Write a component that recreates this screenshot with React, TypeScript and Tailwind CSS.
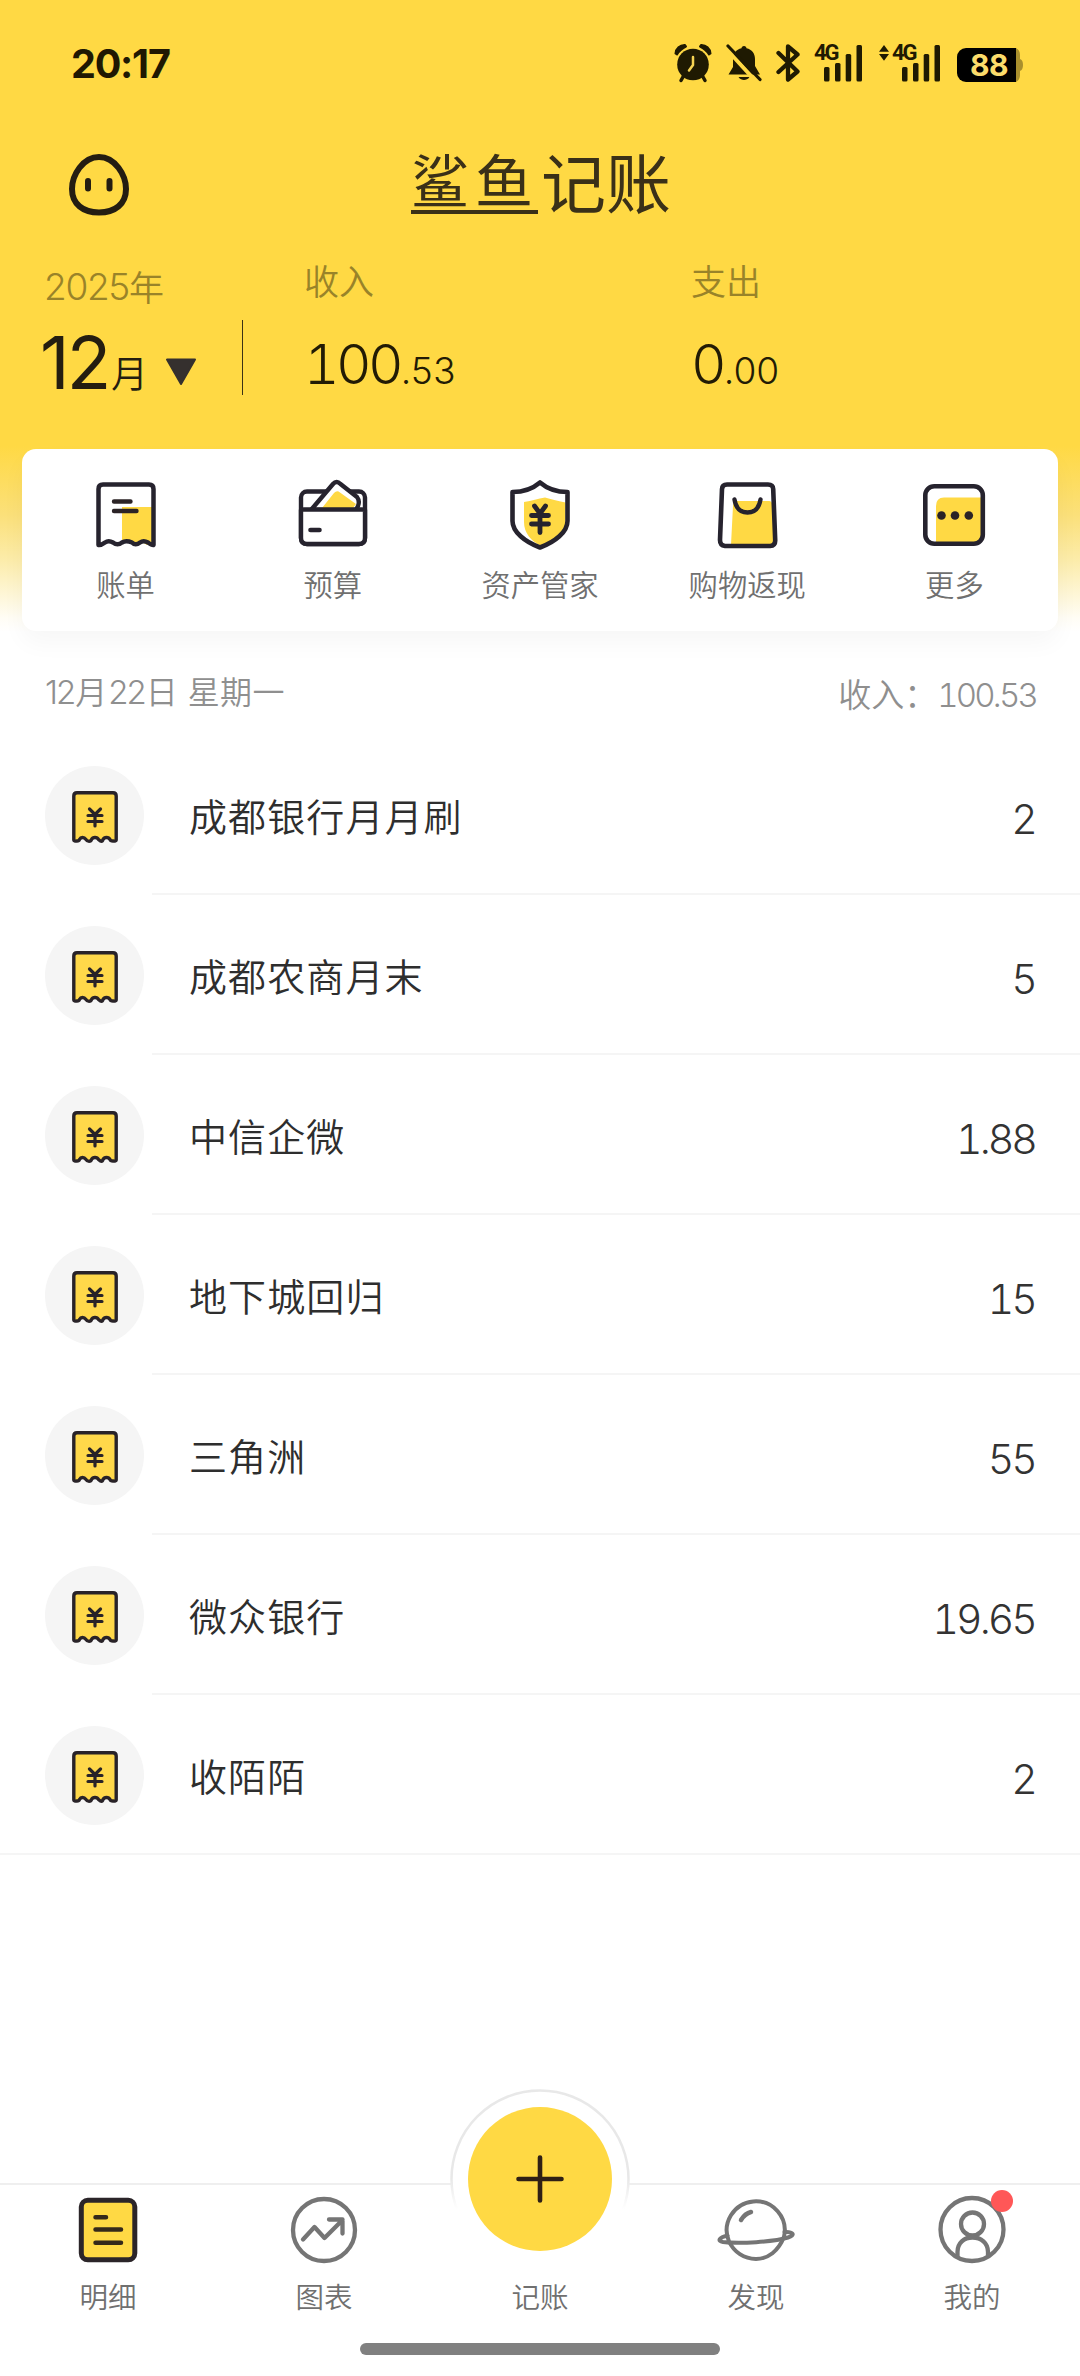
import type { ReactNode } from "react";

const INK = "#26232e";
const GREY = "#757575";
const YELLOW = "#ffd944";

const records = [
  { name: "成都银行月月刷", amount: "2" },
  { name: "成都农商月末", amount: "5" },
  { name: "中信企微", amount: "1.88" },
  { name: "地下城回归", amount: "15" },
  { name: "三角洲", amount: "55" },
  { name: "微众银行", amount: "19.65" },
  { name: "收陌陌", amount: "2" },
];

function AlarmIcon() {
  return (
    <svg width="38" height="40" viewBox="0 0 38 40" fill="#1f1a02">
      <circle cx="19" cy="21.5" r="15.8" />
      <path d="M1.500 10.500A9 9 0 0 1 11 2L12 3.500A20 20 0 0 0 3 11.500ZM36.500 10.500A9 9 0 0 0 27 2L26 3.500A20 20 0 0 1 35 11.500Z" stroke="#1f1a02" strokeWidth="2" strokeLinejoin="round" />
      <path d="M9.500 33L7 37.500M28.500 33L31 37.500" stroke="#1f1a02" strokeWidth="3.500" strokeLinecap="round" />
      <path d="M19 14V22L15 27.500" fill="none" stroke="#f5d352" strokeWidth="2.500" strokeLinecap="round" strokeLinejoin="round" />
    </svg>
  );
}

function BellOffIcon() {
  return (
    <svg width="36" height="40" viewBox="0 0 36 40">
      <path
        d="M18 3C19.500 3 20.500 4 20.500 5.300C26 6.500 29 10.500 29 16V23L34 31.500H2.500L7 24V16C7 10.500 10 6.500 15.500 5.300C15.500 4 16.500 3 18 3Z"
        fill="#1f1a02"
      />
      <path d="M12.500 34H23.500C22 36.300 20 37 18 37S14 36.300 12.500 34Z" fill="#1f1a02" />
      <path d="M-1 4.500L31 39.500" stroke="#ffd944" strokeWidth="4" />
      <path d="M2 3L34 36.500" stroke="#1f1a02" strokeWidth="3.200" strokeLinecap="round" />
    </svg>
  );
}

function BluetoothIcon() {
  return (
    <svg width="24" height="40" viewBox="0 0 24 40">
      <path d="M2.500 10L21.500 28.500L12 36.500V3.500L21.500 11.500L2.500 29" fill="none" stroke="#1f1a02" strokeWidth="4.300" strokeLinejoin="round" strokeLinecap="round" />
    </svg>
  );
}

function Signal({ arrows }: { arrows?: boolean }) {
  return (
    <div className="relative h-[38px] w-[38px]">
      <svg width="38" height="38" viewBox="0 0 38 38" fill="#1f1a02">
        <rect x="0" y="23" width="5.500" height="14.500" rx="1.500" />
        <rect x="11" y="19" width="5.500" height="18.500" rx="1.500" />
        <rect x="21.700" y="10" width="5.500" height="27.500" rx="1.500" />
        <rect x="32.500" y="1" width="5.500" height="36.500" rx="1.500" />
      </svg>
      <span className="absolute left-[-10px] top-[-2px] text-[22px] leading-none font-bold tracking-[-2px] text-[#1f1a02] [font-family:Roboto,sans-serif]">
        4G
      </span>
      {arrows && (
        <svg className="absolute left-[-23px] top-[1px]" width="10" height="16" viewBox="0 0 10 16" fill="#1f1a02">
          <path d="M5 0L10 6.800H0ZM5 15.800L0 9H10Z" />
        </svg>
      )}
    </div>
  );
}

function BatteryBadge() {
  return (
    <div className="mt-[4px] flex items-center">
      <div className="flex h-[34px] w-[59px] items-center justify-center rounded-l-[9px] bg-black pl-[5px] text-[30px] leading-none font-bold tracking-[-0.500px] text-[#fbdc6b] [font-family:Inter,sans-serif]">
        88
      </div>
      <svg width="7" height="34" viewBox="0 0 7 34" fill="#a98f2d">
        <path d="M0 0Q4 2 4 7V11Q7 12 7 17T4 23V27Q4 32 0 34Z" />
      </svg>
    </div>
  );
}

function EggFace() {
  return (
    <svg width="62" height="62" viewBox="0 0 62 62">
      <path d="M31 3C47 3 58 21 58 35C58 50 47 58.500 31 58.500S4 50 4 35C4 21 15 3 31 3Z" fill="none" stroke="#241d12" strokeWidth="6" />
      <path d="M20 27V34.500M41.500 27V34.500" stroke="#241d12" strokeWidth="6" strokeLinecap="round" />
    </svg>
  );
}

function BillIcon() {
  return (
    <svg width="70" height="72" viewBox="0 0 70 72" fill="none" strokeLinecap="round" strokeLinejoin="round">
      <path d="M31 28H61V64L56 66L49 62L42 66L35 62L31 64Z" fill={YELLOW} />
      <path
        d="M7.500 66V10Q7.500 5.500 12 5.500H58Q62.500 5.500 62.500 10V66Q61 66.500 57 63.500Q52.500 61 49 63.500Q44.500 67 41 63.500Q35 61 31 63.500Q26.500 67 22 63.500Q17.500 61 14 63.500Q10 66.500 7.500 66Z"
        stroke={INK}
        strokeWidth="4.500"
      />
      <path d="M23 22.500H39.500M23 32H45.500" stroke="#2b2326" strokeWidth="4.400" />
    </svg>
  );
}

function BudgetIcon() {
  return (
    <svg width="70" height="72" viewBox="0 0 70 72" fill="none" strokeLinecap="round" strokeLinejoin="round">
      <rect x="3" y="12.500" width="64" height="52.500" rx="6" stroke={INK} strokeWidth="4.400" />
      <path d="M13 31L35 5Q38.500 1 42.500 5L59 18Q62 22 60 27L58 31Z" fill="#fff" stroke={INK} strokeWidth="4.400" />
      <path d="M24 29L36 14Q39 11 42 13.500L58 25L55 29Z" fill={YELLOW} />
      <path d="M3 31V59Q3 65 9 65H61Q67 65 67 59V31Q66 30.500 64 30.500H6Q3.500 30.500 3 31Z" fill="#fff" stroke={INK} strokeWidth="4.400" />
      <path d="M12.500 51H21.500" stroke={INK} strokeWidth="4.600" />
    </svg>
  );
}

function ShieldIcon() {
  return (
    <svg width="70" height="72" viewBox="0 0 70 72" fill="none" strokeLinecap="round" strokeLinejoin="round">
      <path d="M19 23C27 22 33 19.500 40 18.500C46 20 52 22 60.500 23.500V44C60 54 47 63 35.500 66.500C26 62 19 54 19 43Z" fill={YELLOW} />
      <path
        d="M35 3.500C42 9.500 50 13 62.500 13V42C62.500 53 50 63 35 68.500C20 63 7.500 53 7.500 42V13C20 13 28 9.500 35 3.500Z"
        stroke={INK}
        strokeWidth="4.600"
      />
      <path d="M29.500 27L35 34.500L40.500 27M26.500 36.500H43.500M26.500 45H43.500M35 35V53.500" stroke={INK} strokeWidth="4.800" />
    </svg>
  );
}

function BagIcon() {
  return (
    <svg width="70" height="72" viewBox="0 0 70 72" fill="none" strokeLinecap="round" strokeLinejoin="round">
      <path d="M21 27Q21 22.500 25 22H57Q60 22 60.500 26L61.500 66H19Z" fill={YELLOW} />
      <path
        d="M15 5.500H56Q61 5.500 61.200 10L63.200 61Q63.500 66.500 58 67H13Q8 66.500 8 61L10 10Q10.200 5.500 15 5.500Z"
        stroke={INK}
        strokeWidth="4.600"
      />
      <path d="M22.500 20.500C24 29.500 29 33.500 35.500 33.500S47 29.500 48.500 20.500" stroke={INK} strokeWidth="4.400" />
    </svg>
  );
}

function MoreIcon() {
  return (
    <svg width="70" height="72" viewBox="0 0 70 72">
      <path d="M17 64V27Q17 18.500 25 18.500H63V60L58 65H17Z" fill={YELLOW} />
      <rect x="6.300" y="7.300" width="57.500" height="57.500" rx="9" fill="none" stroke={INK} strokeWidth="4.600" />
      <g fill="#2b2326">
        <circle cx="22.500" cy="36.500" r="4.300" />
        <circle cx="36" cy="36.500" r="4.300" />
        <circle cx="49.800" cy="36.500" r="4.300" />
      </g>
    </svg>
  );
}

function ReceiptIcon() {
  return (
    <svg className="mt-[3px]" width="46" height="52" viewBox="0 0 46 52" fill="none" strokeLinecap="round" strokeLinejoin="round">
      <path
        d="M1.800 49V5Q1.800 1.800 5 1.800H41Q44.200 1.800 44.200 5V49Q44 50.500 41 50Q38.500 50 38 48.500Q37 46.500 34.500 46.500T31 48.500Q30.500 50.300 29.500 50.300T26.500 48.500Q25.500 46.500 23 46.500T19.500 48.500Q19 50.300 17 50.300T14 48.500Q12.500 46.500 10.500 46.500T7.500 48.500Q7 50 5 50Q2 50.500 1.800 49Z"
        fill="#ffd84a"
        stroke="#292328"
        strokeWidth="3.400"
      />
      <path d="M17.500 18L23 23.500L28.500 18M16 24.500H30M16 30.500H30M23 24V35" stroke="#292328" strokeWidth="3.200" />
    </svg>
  );
}

function DetailIcon() {
  return (
    <svg width="78" height="74" viewBox="0 0 78 74" fill="none">
      <rect x="12.300" y="7.300" width="53.500" height="59.500" rx="6.500" fill={YELLOW} stroke="#2b2529" strokeWidth="5" />
      <path d="M26.500 24.200H37M26.500 36.500H52M26.500 49.700H52" stroke="#35291a" strokeWidth="4.500" strokeLinecap="round" />
    </svg>
  );
}

function ChartIcon() {
  return (
    <svg width="78" height="74" viewBox="0 0 78 74" fill="none" stroke={GREY} strokeWidth="4.300" strokeLinecap="round" strokeLinejoin="round">
      <circle cx="39" cy="37" r="31" />
      <path d="M18 46.500L29.500 34L39.500 45L57.500 27M44 26.500H57.500V40.500" />
    </svg>
  );
}

function PlanetIcon() {
  return (
    <svg width="78" height="74" viewBox="0 0 78 74" fill="none" stroke={GREY} strokeWidth="4" strokeLinecap="round" strokeLinejoin="round">
      <path d="M12 48.500A29 29 0 1 1 67 43.800M12 48.500C17 59 27 66 39 66S61.500 58 67 43.800" />
      <path d="M10.500 42.500C2 44.500 0 48 6 49C22 51 57 49 71 44.500C79 42 76 38.500 67.500 39" />
      <path d="M24 27Q28 20.500 34 19" strokeWidth="4.500" />
    </svg>
  );
}

function ProfileIcon() {
  return (
    <svg width="78" height="74" viewBox="0 0 78 74" fill="none" stroke={GREY} strokeWidth="4.300" strokeLinecap="round">
      <circle cx="39" cy="36.500" r="31.500" />
      <circle cx="39.500" cy="31" r="11.500" />
      <path d="M24.500 63V59C24.500 50 31 44.500 39.500 44.500S55 50 55 59V62" />
    </svg>
  );
}

function Shortcut({ label, children }: { label: string; children: ReactNode }) {
  return (
    <div className="flex flex-1 flex-col items-center">
      {children}
      <span className="mt-[17px] text-[29.3px] leading-[30px] font-[350] text-[#707070]">{label}</span>
    </div>
  );
}

function Tab({ label, children }: { label: string; children?: ReactNode }) {
  return (
    <div className="relative flex flex-1 flex-col items-center">
      <div className="h-[74px]">{children}</div>
      <span className="mt-[14px] text-[28.5px] leading-[30px] font-[350] text-[#707070]">{label}</span>
    </div>
  );
}

function Money({ whole, cents }: { whole: string; cents: string }) {
  return (
    <div className="text-[55px] leading-[60px] font-light tracking-[-3.600px] tabular-nums text-[#221b05] [font-family:Inter,sans-serif]">
      {whole}
      <span className="ml-[1px] text-[37px] tracking-[-1px]">.{cents}</span>
    </div>
  );
}

export default function App() {
  return (
    <div className='flex h-[2376px] w-[1080px] flex-col overflow-hidden bg-white whitespace-nowrap [font-family:"Noto_Sans_CJK_SC",sans-serif]'>
      <header className="h-[632px] bg-[linear-gradient(to_bottom,#ffd944_0px,#ffd944_446px,#fbe07a_515px,#fcecaa_560px,#fffdf5_618px,#ffffff_632px)]">
        <div className="flex h-[126px] items-center justify-between pr-[57px] pl-[71px]">
          <span className="mt-[4px] text-[39.500px] leading-none font-bold tracking-[-1.200px] text-[#201802] [font-family:Inter,sans-serif]">20:17</span>
          <div className="flex items-center">
            <AlarmIcon />
            <div className="w-[14px]" />
            <BellOffIcon />
            <div className="w-[14px]" />
            <BluetoothIcon />
            <div className="w-[24px]" />
            <Signal />
            <div className="w-[40px]" />
            <Signal arrows />
            <div className="w-[17px]" />
            <BatteryBadge />
          </div>
        </div>

        <div className="grid h-[122px] grid-cols-[411px_258px_1fr]">
          <div className="pt-[28px] pl-[68px]">
            <EggFace />
          </div>
          <div className="flex items-start pt-[27px] text-[#3a3018]">
            <span className="mr-[3px] h-[61px] w-[127px] shrink-0 border-b-[4px] border-[#3a3018] text-[58px] leading-[51px] tracking-[6px]">鲨鱼</span>
            <span className="text-[65px] leading-[54px]">记账</span>
          </div>
        </div>

        <div className="grid h-[201px] grid-cols-[242px_1px_448px_1fr]">
          <div className="pl-[44px]">
            <div className="flex h-[72px] items-end pb-[14px] leading-none text-[#998329]">
              <span className="text-[37px] leading-[38px] font-light tracking-[-1.300px] [font-family:Inter,sans-serif]">2025</span>
              <span className="text-[35px] leading-[40px] font-[350]">年</span>
            </div>
            <div className="flex h-[80px] items-end text-[#241d10]">
              <span className="-ml-[4px] w-[67px] text-[73px] leading-[75px] tracking-[-3px] [font-family:Inter,sans-serif]">12</span>
              <span className="ml-[4px] text-[37px] leading-[55px] font-[350]">月</span>
              <svg className="mb-[14px] ml-[17px]" width="32" height="28" viewBox="0 0 32 28">
                <path d="M2 1.500H30L16 26Z" fill="#35302e" stroke="#35302e" strokeWidth="2" strokeLinejoin="round" />
              </svg>
            </div>
          </div>
          <div className="mt-[72px] h-[75px] bg-[#3b3215]" />
          <div className="pt-[13px] pl-[61px]">
            <div className="text-[35px] leading-[38px] font-[350] text-[#998329]">收入</div>
            <div className="mt-[35px]">
              <Money whole="100" cents="53" />
            </div>
          </div>
          <div className="pt-[13px]">
            <div className="text-[35px] leading-[38px] font-[350] text-[#998329]">支出</div>
            <div className="mt-[35px]">
              <Money whole="0" cents="00" />
            </div>
          </div>
        </div>

        <div className="mx-[22px] flex h-[182px] rounded-[14px] bg-white pt-[30px] shadow-[0_12px_24px_rgba(0,0,0,0.035)]">
          <Shortcut label="账单"><BillIcon /></Shortcut>
          <Shortcut label="预算"><BudgetIcon /></Shortcut>
          <Shortcut label="资产管家"><ShieldIcon /></Shortcut>
          <Shortcut label="购物返现"><BagIcon /></Shortcut>
          <Shortcut label="更多"><MoreIcon /></Shortcut>
        </div>
      </header>

      <main className="grow">
        <div className="flex h-[103px] items-start justify-between pt-[40px] pr-[45px] pl-[45px] leading-[36px] font-[350] text-[#8f8f8f]">
          <div className="text-[32px]">
            <span className="text-[33px] font-light tracking-[-2px] [font-family:Inter,sans-serif]">12</span>
            <span className="ml-[1px]">月</span>
            <span className="ml-[1px] text-[33px] font-light tracking-[-2px] [font-family:Inter,sans-serif]">22</span>
            <span className="ml-[1px]">日</span>
            <span className="ml-[10px] tracking-[0.300px]">星期一</span>
          </div>
          <div className="mt-[3px] -mr-[1px] text-[33px]">
            收入：<span className="font-light tracking-[-2.800px] tabular-nums [font-family:Inter,sans-serif]">100.53</span>
          </div>
        </div>

        <ul>
          {records.map((r, i) => (
            <li key={i} className="relative flex h-[160px] items-center pt-px pr-[45px] pl-[45px]">
              <span className="flex size-[99px] items-center justify-center rounded-full bg-[#f5f5f5]">
                <ReceiptIcon />
              </span>
              <span className="-mt-[2px] ml-[45px] text-[38px] leading-[44px] font-[350] tracking-[1.100px] text-[#2e2e2e]">{r.name}</span>
              <span className="mt-[6px] ml-auto text-[41px] leading-[44px] font-light tracking-[-2.900px] tabular-nums text-[#333333] [font-family:Inter,sans-serif]">{r.amount}</span>
              <span className={i === records.length - 1 ? "absolute right-0 bottom-0 left-0 h-[2px] bg-[#f5f5f5]" : "absolute right-0 bottom-0 left-[152px] h-[2px] bg-[#f5f5f5]"} />
            </li>
          ))}
        </ul>
      </main>

      <nav className="relative h-[193px] border-t-2 border-[#efefef] bg-white">
        <svg className="absolute -top-[100px] left-[446px]" width="188" height="168" viewBox="0 0 188 168" fill="none">
          <defs>
            <linearGradient id="ring" x1="0" y1="94" x2="0" y2="124" gradientUnits="userSpaceOnUse">
              <stop offset="0" stopColor="#e8e8e8" />
              <stop offset="1" stopColor="#ffffff" />
            </linearGradient>
          </defs>
          <circle cx="94" cy="94" r="88.500" fill="#fff" stroke="url(#ring)" strokeWidth="2.500" />
          <circle cx="94" cy="94" r="72" fill={YELLOW} />
          <path d="M72.500 94H115.500M94 72.500V115.500" stroke="#2f2015" strokeWidth="4.600" strokeLinecap="round" />
        </svg>
        <div className="flex pt-[8px]">
          <Tab label="明细"><DetailIcon /></Tab>
          <Tab label="图表"><ChartIcon /></Tab>
          <Tab label="记账" />
          <Tab label="发现"><PlanetIcon /></Tab>
          <Tab label="我的">
            <ProfileIcon />
            <span className="absolute -top-[3px] left-[127px] size-[22px] rounded-full bg-[#ff5757]" />
          </Tab>
        </div>
        <div className="mx-auto mt-[32px] h-[12px] w-[360px] rounded-full bg-[#808080]" />
      </nav>
    </div>
  );
}
